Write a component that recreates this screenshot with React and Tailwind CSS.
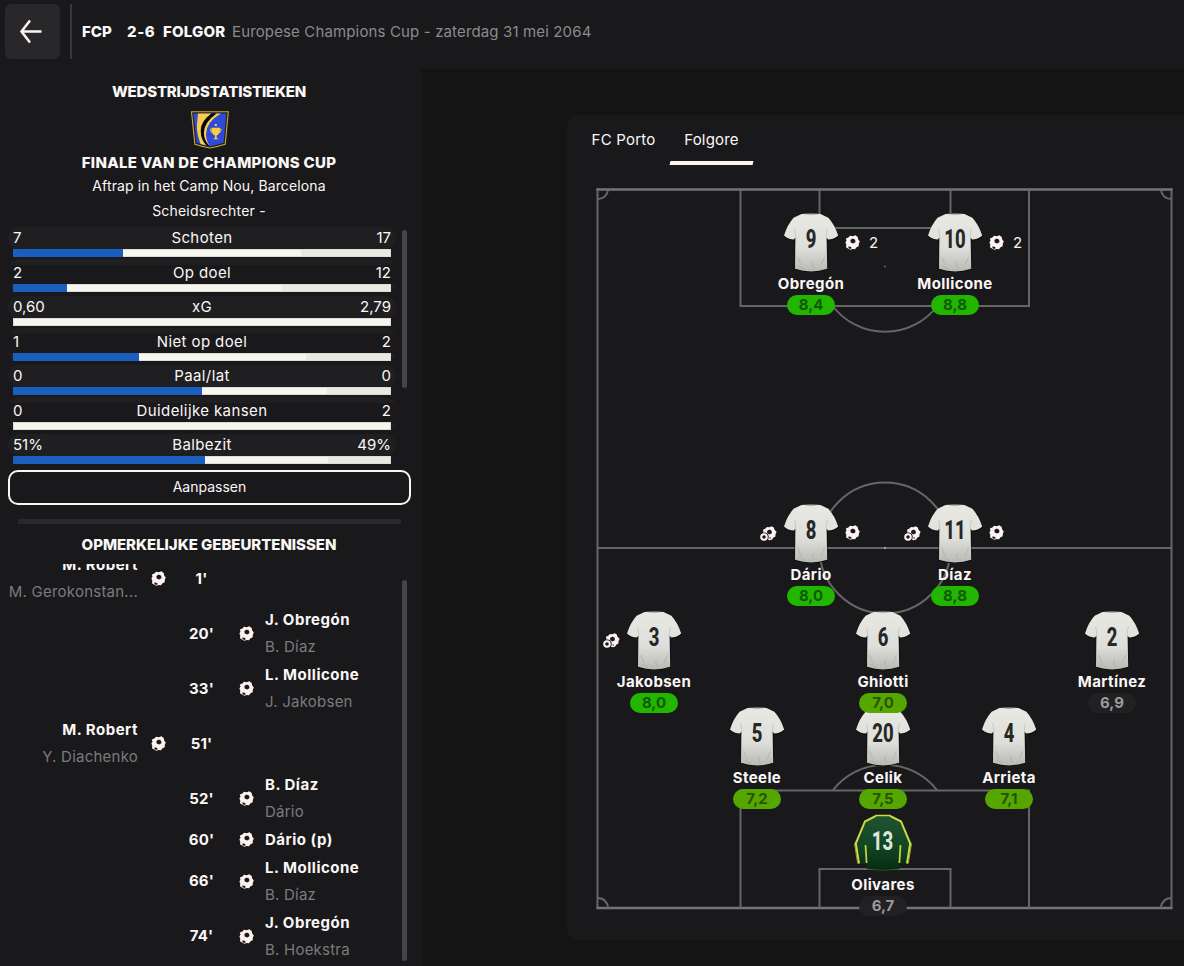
const stats = [
    { label: "Schoten", home: "7", away: "17", share: 29.1 },
    { label: "Op doel", home: "2", away: "12", share: 14.2 },
    { label: "xG", home: "0,60", away: "2,79", share: 0 },
    { label: "Niet op doel", home: "1", away: "2", share: 33.3 },
    { label: "Paal/lat", home: "0", away: "0", share: 50 },
    { label: "Duidelijke kansen", home: "0", away: "2", share: 0 },
    { label: "Balbezit", home: "51%", away: "49%", share: 50.8 },
]

const events = [
    { minute: "1'", side: "home", scorer: "M. Robert", assist: "M. Gerokonstan..." },
    { minute: "20'", side: "away", scorer: "J. Obregón", assist: "B. Díaz" },
    { minute: "33'", side: "away", scorer: "L. Mollicone", assist: "J. Jakobsen" },
    { minute: "51'", side: "home", scorer: "M. Robert", assist: "Y. Diachenko" },
    { minute: "52'", side: "away", scorer: "B. Díaz", assist: "Dário" },
    { minute: "60'", side: "away", scorer: "Dário (p)" },
    { minute: "66'", side: "away", scorer: "L. Mollicone", assist: "B. Díaz" },
    { minute: "74'", side: "away", scorer: "J. Obregón", assist: "B. Hoekstra" },
]

// x is the centre of the shirt, y its top edge
const players = [
    { nr: 13, name: "Olivares", rating: "6,7", x: 285, y: 625, keeper: true },
    { nr: 5, name: "Steele", rating: "7,2", x: 159, y: 518 },
    { nr: 20, name: "Celik", rating: "7,5", x: 285, y: 518 },
    { nr: 4, name: "Arrieta", rating: "7,1", x: 411, y: 518 },
    { nr: 3, name: "Jakobsen", rating: "8,0", x: 56, y: 422, assists: 1 },
    { nr: 6, name: "Ghiotti", rating: "7,0", x: 285, y: 422 },
    { nr: 2, name: "Martínez", rating: "6,9", x: 514, y: 422 },
    { nr: 8, name: "Dário", rating: "8,0", x: 213, y: 315, goals: 1, assists: 1 },
    { nr: 11, name: "Díaz", rating: "8,8", x: 357, y: 315, goals: 1, assists: 1 },
    { nr: 9, name: "Obregón", rating: "8,4", x: 213, y: 24, goals: 2 },
    { nr: 10, name: "Mollicone", rating: "8,8", x: 357, y: 24, goals: 2 },
]

const ratingColor = (rating) => {
    const value = parseFloat(rating.replace(",", "."))
    if (value >= 8) return "bg-[#22b600] text-[#0f5a05]"
    if (value >= 7) return "bg-[#56a600] text-[#2a5203]"
    return "bg-[#222023] text-[#9b9b9c]"
}

const Ball = () => (
    <svg width="15" height="15" viewBox="0 0 15 15" className="shrink-0">
        <path d="M5 .7 7.8 1.2 10.3 .3 12.7 2 13.2 4.4 14.8 6.6 13.8 8.8 13.7 11.2 11.5 12.3 10 14.2 7.7 14 5.5 14.7 3 13.6 1 12.3 1.3 9.8 .4 7.6 1.5 5.6 .8 3.4 3.4 2.6z" fill="#fff3f2" />
        <path d="M7.7 3.6 10.2 4.7 10.4 7.2 8.2 8.6 5.7 7.5 5.4 5z" fill="#19191b" />
        <path d="M3.2 11.6 5.6 11.7 6.8 13.1 5.6 14 3.6 13.2z" fill="#19191b" />
    </svg>
)

const AssistBall = () => (
    <svg width="17" height="15" viewBox="0 0 17 15" className="shrink-0">
        <path d="M7 .9 9.4 1.2 11.6 .3 13.8 1.5 14.5 3.8 16.6 5.8 15.5 8.2 15.4 10.6 13.2 11.8 12 13.8 9 14.2 3 9 3.4 6 3 3.8 5.2 2.8z" fill="#fff3f2" />
        <path d="M9.3 3.6 11.7 4.7 11.8 7.2 9.6 8.4 7.2 7.2 7.1 5z" fill="#19191b" />
        <circle cx="4.4" cy="10.8" r="4.4" fill="#19191b" />
        <circle cx="4" cy="11" r="2.8" fill="none" stroke="#fff3f2" strokeWidth="2" />
        <path d="M9.6 11 11.2 12 9.8 13z" fill="#19191b" />
    </svg>
)

const Crest = () => (
    <svg width="38" height="38" viewBox="0 0 38 38" className="translate-x-px">
        <path d="M.5.8H37.3L34.2 33.2Q26 35.8 19 37 12 35.8 3.9 33.2z" fill="#20201c" stroke="#d2ab3c" strokeWidth="1.1" />
        <path d="M2.4 2.6H35.4L32.6 31.8Q25 34.3 19 35.2 12.5 34 5.6 31.8z" fill="#2f49d8" />
        <path d="M7 2.6H20.5Q9 11 10 22 10.7 29 15.5 34.5L9.6 33Q5.6 22 5.9 14z" fill="#f9cd47" />
        <path d="M20.5 2.6H25.6Q13.6 12 13.6 23 13.7 30 18.3 35L15.5 34.5Q9.5 28 9.7 19.5 10 10 20.5 2.6z" fill="#07080f" />
        <path d="M25.6 2.6H29.8Q15.5 11 15 23 15 29.5 18.8 35 13 29.5 12.9 22 13 11.5 25.6 2.6z" fill="#f9cd47" />
        <path d="M20.5 16.8H29V19Q28.7 23.3 25.6 24.4V26.8L27.6 28.2H22L24 26.8V24.4Q20.9 23.3 20.5 19z" fill="#f9cd47" />
        <path d="M20.7 18.2H19.4Q19.3 21.5 22 22M28.8 18.2H30.2Q30.3 21.5 27.6 22" fill="none" stroke="#f9cd47" strokeWidth=".9" />
        <circle cx="24.8" cy="13.9" r="1.2" fill="#f9cd47" />
    </svg>
)

const Shirt = ({ nr }) => (
    <svg width="58" height="62" viewBox="0 0 58 62">
        <defs>
            <linearGradient id={`body${nr}`} x1="0" y1="0" x2="0" y2="1">
                <stop offset="0" stopColor="#e9e9e4" />
                <stop offset=".6" stopColor="#dededa" />
                <stop offset="1" stopColor="#b9bab4" />
            </linearGradient>
        </defs>
        <path d="M19.5 2.2Q29 .2 38.5 2.2L47 6.2Q53 13 56.6 24.4 52.5 28.7 45.4 28.6L45.6 57.4Q29 62.8 12.6 57.4L12.8 28.6Q5.5 28.6 1.6 24.6 5 13 11 6.2z" fill="#0b0b0b" />
        <path d="M19.5 2Q29 .8 38.5 2L46.4 5.8Q52.5 12.5 56.2 23.4 52 27.4 46 27.4L44.6 25.5 45.2 56.8Q29 62 13 56.8L13.4 25.5 12 27.4Q6 27.4 2 23.4 5.5 12.5 11.6 5.8z" fill={`url(#body${nr})`} />
        <path d="M13.8 26Q13.6 20 12.6 17M44.2 26Q44.4 20 45.4 17" fill="none" stroke="#c2c2bd" strokeWidth=".8" />
        <path d="M15.5 45 19 53M42.6 45 39 53M31 50Q30.2 54 32.6 57M17 54 23 57.5" fill="none" stroke="#a9aaa4" strokeWidth=".7" />
        <path d="M22 1.6Q29 2.6 36 1.6" fill="none" stroke="#6a5650" strokeWidth=".8" />
        <text transform="translate(29 35.500) scale(.74 1)" textAnchor="middle" className="fill-[#272725] font-['Roboto'] text-[25px] font-extrabold">{nr}</text>
    </svg>
)

const KeeperShirt = ({ nr }) => (
    <svg width="60" height="60" viewBox="-1 0 60 60">
        <defs>
            <linearGradient id="keeper" x1="0" y1="0" x2="0" y2="1">
                <stop offset="0" stopColor="#1f5432" />
                <stop offset=".6" stopColor="#114421" />
                <stop offset="1" stopColor="#062b12" />
            </linearGradient>
        </defs>
        <path d="M22 2H36L47.500 8Q52 17 58 30.500L54.400 51Q50 51.500 45.400 49.500L45.600 56Q29 58.500 12.700 56L12.800 49.500Q8 51.500 3.800 51L0 30.500Q6 17 10.500 8z" fill="url(#keeper)" />
        <path d="M22 2.800 10.900 8.500Q7.500 17 1.800 30.500L5 50.500M36 2.800 47.100 8.500Q50.500 17 56.200 30.500L53 50.500" fill="none" stroke="#d2da42" strokeWidth="2" />
        <path d="M.5 30.500 3.700 50.500M57.500 30.500 54.300 50.500" fill="none" stroke="#a3ae36" strokeWidth=".9" />
        <path d="M21.500 2.500H36.500" fill="none" stroke="#d2da42" strokeWidth="1.500" />
        <path d="M11.500 32 12.600 50M46.500 32 45.400 50" fill="none" stroke="#c3cf3c" strokeWidth="1.800" />
        <path d="M13.500 56.200Q29 58.500 44.800 56.200" fill="none" stroke="#50662a" strokeWidth=".6" />
        <text transform="translate(28.500 37) scale(.74 1)" textAnchor="middle" className="fill-[#dce6dc] font-['Roboto'] text-[25px] font-extrabold">{nr}</text>
    </svg>
)

const Pitch = () => (
    <svg width="576" height="722" viewBox="0 0 576 722" fill="none" stroke="#666668" strokeWidth="2" className="overflow-visible">
        <path d="M-.5 0V721M573.5 0V721" />
        <path d="M-1.5 1.5H574.5M-1.5 720H574.5" stroke="#747476" strokeWidth="2.6" />
        <path d="M142.500 2V118H431V2M221.500 2V40H352.500V2" />
        <path d="M142.500 720V602.500H431V720M221.500 720V681H352.500V720" />
        <path d="M0 360H573" />
        <circle cx="287" cy="360" r="65.500" />
        <path d="M235 118.500A66 66 0 0 0 339 118.500M235 602A66 66 0 0 1 339 602" />
        <path d="M0 11A10 10 0 0 0 10 2M573 11A10 10 0 0 1 563 2M0 710A10 10 0 0 1 10 720M573 710A10 10 0 0 0 563 720" />
        <circle cx="287" cy="78.500" r="1" fill="#666668" stroke="none" />
        <circle cx="287" cy="360" r="1.200" fill="#a0a0a0" stroke="none" />
    </svg>
)

const Player = ({ player }) => (
    <div
        className="absolute flex w-[120px] -translate-x-1/2 flex-col items-center"
        style={{ left: player.x, top: player.y }}
    >
        <div className="relative h-[62px]">
            {player.keeper ? <KeeperShirt nr={player.nr} /> : <Shirt nr={player.nr} />}
            {player.goals && (
                <div className="absolute left-[63px] top-[22px] flex items-center">
                    <Ball />
                    {player.goals > 1 && <span className="ml-[9px] mt-px text-[15px] leading-4">{player.goals}</span>}
                </div>
            )}
            {player.assists && (
                <div className="absolute -left-[22px] top-[23px]">
                    <AssistBall />
                </div>
            )}
        </div>
        <p className="h-[21px] text-[15px] font-bold leading-[20px] tracking-[0.4px]">{player.name}</p>
        <p className={`h-5 w-12 rounded-full text-center text-[15px] font-bold leading-5 ${ratingColor(player.rating)}`}>
            {player.rating}
        </p>
    </div>
)

const StatRow = ({ stat, even }) => (
    <div className="relative h-[34.5px]">
        {even ? (
            <div className="absolute -top-[3px] left-0 h-[33px] w-[388px] rounded-[10px] bg-[#1f1f21] py-[6.5px]">
                <div className="h-full bg-[#19191b]" />
            </div>
        ) : (
            <div className="absolute left-0 top-0 h-[22px] w-[388px] rounded-[10px] bg-[#1f1f21]" />
        )}
        <div className="relative ml-[5px] w-[378px]">
            <div className="grid h-[22px] grid-cols-[1fr_auto_1fr] text-[15px] leading-[22px]">
                <span>{stat.home}</span>
                <span className="tracking-[0.4px]">{stat.label}</span>
                <span className="text-right">{stat.away}</span>
            </div>
            <div className="flex h-2 border border-[#dcdcd4] bg-[#f6f6ee]">
                {stat.share > 0 && (
                    <div className="-my-px -ml-px border-r border-[#1a5fc0] bg-[#1a5fc0]" style={{ width: `calc(${stat.share}% + 1px)` }} />
                )}
                <div className="flex-1" />
                {stat.share > 0 && <div className="bg-[#e9e9e2]" style={{ width: `${(100 - stat.share) / 3}%` }} />}
            </div>
        </div>
    </div>
)

const EventRow = ({ event }) => {
    const names = (
        <div className={event.side === "home" ? "text-right" : ""}>
            <p className="h-[27px] font-bold leading-[27px] tracking-[0.5px]">{event.scorer}</p>
            {event.assist && (
                <p className="h-7 whitespace-nowrap leading-[27px] tracking-[0.23px] text-[#7b7b7d]">{event.assist}</p>
            )}
        </div>
    )
    return (
        <div className="grid grid-cols-[138px_41px_45px_41px_1fr] items-center text-[15px] leading-[27.5px]">
            <div>{event.side === "home" && names}</div>
            <div className="flex justify-center">{event.side === "home" && <Ball />}</div>
            <p className="text-center font-bold tracking-[0.2px]">{event.minute}</p>
            <div className="flex justify-center pl-[3px]">{event.side === "away" && <Ball />}</div>
            <div>{event.side === "away" && names}</div>
        </div>
    )
}

const App = () => {
    return (
        <div className="flex h-[966px] w-[1184px] flex-col overflow-hidden bg-[#141414] font-['Inter',sans-serif] text-[15px] text-[#fbf7f6]">
            <header className="flex h-[69px] shrink-0 bg-[#19181b] pl-[5px] pt-1">
                <button className="flex h-[55px] w-[55px] items-center justify-center rounded-md bg-[#28272a]">
                    <svg width="24" height="27" viewBox="0 0 24 27" fill="none" stroke="#fff3f2" strokeWidth="2.5" className="-ml-1.5">
                        <path d="M12 2.5 3.5 13.5 12 24.5M3 13.5H23.500" />
                    </svg>
                </button>
                <div className="ml-2.5 h-[55px] w-0.5 bg-[#38373a]" />
                <div className="ml-2.5 flex h-[55px] items-center whitespace-nowrap pt-0.5">
                    <span className="w-[45px] font-extrabold">FCP</span>
                    <span className="w-[36px] font-extrabold tracking-[0.6px]">2-6</span>
                    <span className="w-[69px] font-extrabold tracking-[0.2px]">FOLGOR</span>
                    <span className="tracking-[0.14px] text-[#8b8b8d]">Europese Champions Cup - zaterdag 31 mei 2064</span>
                </div>
            </header>
            <div className="flex flex-1">
                <aside className="flex h-[897px] w-[423px] flex-col rounded-tr-lg bg-[#19191b]">
                    <div className="flex h-[158px] w-[418px] flex-col items-center pt-[11px] text-center">
                        <h2 className="h-[31px] font-extrabold leading-6 tracking-[-0.2px]">WEDSTRIJDSTATISTIEKEN</h2>
                        <Crest />
                        <h2 className="mt-0.5 h-[23px] font-extrabold leading-6 tracking-[0.27px]">FINALE VAN DE CHAMPIONS CUP</h2>
                        <p className="h-[25px] text-[14px] leading-6 tracking-[0.12px]">Aftrap in het Camp Nou, Barcelona</p>
                        <p className="text-[14px] leading-6 tracking-[0.2px]">Scheidsrechter -</p>
                    </div>
                    <div className="flex h-[237px] overflow-hidden pl-2">
                        <div className="w-[394px]">
                            {stats.map((stat, i) => (
                                <StatRow key={stat.label} stat={stat} even={i % 2 === 1} />
                            ))}
                        </div>
                        <div className="mt-[3px] h-[158px] w-[5px] rounded-full bg-[#454447]" />
                    </div>
                    <button className="ml-2 mt-1.5 h-[35px] w-[403px] rounded-[10px] border-2 border-[#fff3f2] pb-px text-[14px] leading-5">
                        Aanpassen
                    </button>
                    <div className="ml-[18px] mt-3.5 h-[5px] w-[383px] bg-[#2a282b]" />
                    <h2 className="mt-[9px] h-[31px] w-[418px] text-center font-extrabold leading-6 tracking-[-0.04px]">OPMERKELIJKE GEBEURTENISSEN</h2>
                    <div className="flex min-h-0 flex-1 overflow-hidden">
                        <div className="-mt-[13px] w-[402px]">
                            {events.map((event) => (
                                <EventRow key={event.minute} event={event} />
                            ))}
                        </div>
                        <div className="mt-4 h-[381px] w-[5px] rounded-full bg-[#454447]" />
                    </div>
                </aside>
                <main className="ml-[144px] mt-[46px] h-[825px] w-[617px] rounded-l-[10px] bg-[#19191b]">
                    <nav className="flex h-[50px] pl-[10px]">
                        <div className="w-[93px] text-center leading-[50px] tracking-[0.2px]">FC Porto</div>
                        <div className="flex w-[83px] flex-col justify-between text-center">
                            <span className="leading-[50px] tracking-[0.2px]">Folgore</span>
                            <div className="-mt-1 h-1 shrink-0 -skew-x-12 bg-[#fff3f2]" />
                        </div>
                    </nav>
                    <div className="relative ml-[31px] mt-[23px] w-[576px]">
                        <Pitch />
                        {players.map((player) => (
                            <Player key={player.nr} player={player} />
                        ))}
                    </div>
                </main>
            </div>
        </div>
    )
}

export default App
